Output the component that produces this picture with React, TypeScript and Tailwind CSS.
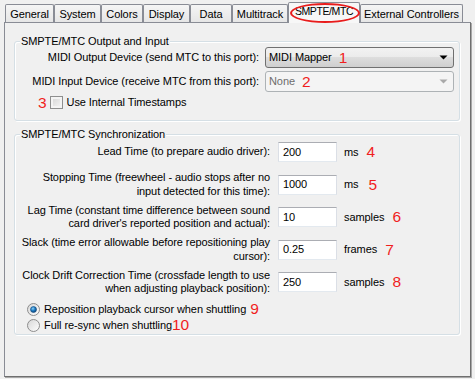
import React from "react";

const RED = "text-[#f01e1e] text-[15.5px] leading-none font-['Liberation_Sans',Arial,sans-serif]";

const tabs: { label: string; w: string; selected?: boolean }[] = [
  { label: "General", w: "w-[49px]" },
  { label: "System", w: "w-[47px]" },
  { label: "Colors", w: "w-[42px]" },
  { label: "Display", w: "w-[47px]" },
  { label: "Data", w: "w-[42px]" },
  { label: "Multitrack", w: "w-[56px]" },
  { label: "SMPTE/MTC", w: "w-[72px]", selected: true },
  { label: "External Controllers", w: "w-[103px]" },
];

function Tab({ label, w, selected }: { label: string; w: string; selected?: boolean }) {
  if (selected) {
    return (
      <div
        className={`${w} relative top-[1px] z-10 h-[21px] flex items-center justify-center pb-[2px] border border-b-0 border-[#898c95] rounded-t-[2px] bg-[#f7f7f7] whitespace-nowrap text-[10.5px] tracking-[-0.4px]`}
      >
        {label}
        <div className="absolute left-[1px] top-[0px] w-[70px] h-[20px] rounded-[50%] border-2 border-[#e81c1c]" />
      </div>
    );
  }
  return (
    <div
      className={`${w} h-[18px] flex items-center justify-center pt-[1px] border border-b-0 border-[#898c95] rounded-t-[2px] bg-gradient-to-b from-[#f5f5f5] to-[#e6e6e6] whitespace-nowrap`}
    >
      {label}
    </div>
  );
}

function Group({ title, className, children }: { title: string; className: string; children: React.ReactNode }) {
  return (
    <div
      className={`relative border border-[#d5dfe5] rounded-[3px] shadow-[inset_1px_1px_0_#ffffff,1px_1px_0_#ffffff] ${className}`}
    >
      <span className="absolute left-[5px] -top-[8px] px-[1px] leading-[14px] bg-[#f0f0f0] whitespace-nowrap">
        {title}
      </span>
      {children}
    </div>
  );
}

function Combo({ text, num, disabled }: { text: string; num: string; disabled?: boolean }) {
  if (disabled) {
    return (
      <div className="w-[189px] h-[21px] ml-[6px] flex items-center pl-[3px] pr-[5px] border border-[#adb2b5] rounded-[3px] bg-[#f4f4f4]">
        <span className="text-[#6d6d6d]">{text}</span>
        <span className={`${RED} ml-[7px]`}>{num}</span>
        <div className="flex-1" />
        <svg width="9" height="5" viewBox="0 0 9 5">
          <path d="M0.5 0.5 H8.5 L4.5 4.5 Z" fill="#a9a9a9" />
        </svg>
      </div>
    );
  }
  return (
    <div className="w-[189px] h-[21px] ml-[6px] flex items-center pl-[3px] pr-[5px] border border-[#707070] rounded-[3px] bg-[linear-gradient(to_bottom,#f2f2f2_0%,#ebebeb_50%,#dddddd_50%,#cfcfcf_100%)]">
      <span>{text}</span>
      <span className={`${RED} ml-[7px]`}>{num}</span>
      <div className="flex-1" />
      <svg width="9" height="5" viewBox="0 0 9 5">
        <path d="M0.5 0.5 H8.5 L4.5 4.5 Z" fill="#000000" />
      </svg>
    </div>
  );
}

function Field({ value }: { value: string }) {
  return (
    <div className="ml-[8px] w-[59px] h-[20px] flex items-center pl-[4px] bg-white border border-[#abadb3] border-l-[#dbdfe6] border-r-[#dbdfe6] border-b-[#e3e9ef]">
      {value}
    </div>
  );
}

function SyncRow({
  lines,
  value,
  unit,
  num,
  numGap,
}: {
  lines: string[];
  value: string;
  unit: string;
  num: string;
  numGap: string;
}) {
  return (
    <div className="h-[28px] flex items-center">
      <div className="w-[255px] flex justify-end">
        <div className="text-right whitespace-nowrap leading-[13.5px]">
          {lines.map((l, i) => (
            <div key={i}>{l}</div>
          ))}
        </div>
      </div>
      <Field value={value} />
      <span className="ml-[7px]">{unit}</span>
      <span className={`${RED} ${numGap}`}>{num}</span>
    </div>
  );
}

function Radio({ checked }: { checked?: boolean }) {
  return (
    <svg width="13" height="13" viewBox="0 0 13 13">
      <defs>
        <linearGradient id={checked ? "rgc" : "rgu"} x1="0" y1="0" x2="1" y2="1">
          <stop offset="0" stopColor="#d6d6d6" />
          <stop offset="1" stopColor="#ffffff" />
        </linearGradient>
        <radialGradient id="dot" cx="0.4" cy="0.35" r="0.7">
          <stop offset="0" stopColor="#8fd1f5" />
          <stop offset="0.5" stopColor="#1b7bc4" />
          <stop offset="1" stopColor="#0b3a6b" />
        </radialGradient>
      </defs>
      <circle cx="6.5" cy="6.5" r="6" fill={`url(#${checked ? "rgc" : "rgu"})`} stroke="#8d8d8d" />
      {checked && <circle cx="6.5" cy="6.5" r="3" fill="url(#dot)" stroke="#104a80" strokeWidth="0.6" />}
    </svg>
  );
}

export default function App() {
  return (
    <div className="w-[475px] h-[379px] bg-[#f0f0f0] overflow-hidden text-[11px] text-black font-['Liberation_Sans',Arial,sans-serif] tracking-[-0.08px]">
      <div className="h-[22px] flex items-end pl-[5px]">
        {tabs.map((t) => (
          <Tab key={t.label} {...t} />
        ))}
      </div>
      <div className="ml-[4px] w-[467px] h-[355px] border border-[#898c95] border-r-[#6f6f6f] border-b-[#6f6f6f] shadow-[1px_1px_0_#a8a8a8] pl-[9px] pt-[18px]">
        <Group title="SMPTE/MTC Output and Input" className="w-[446px] h-[80px] pt-[5px]">
          <div className="flex items-center h-[21px]">
            <div className="w-[244px] flex justify-end">
              <span className="whitespace-nowrap">MIDI Output Device (send MTC to this port):</span>
            </div>
            <Combo text="MIDI Mapper" num="1" />
          </div>
          <div className="flex items-center h-[21px] mt-[3px]">
            <div className="w-[244px] flex justify-end">
              <span className="whitespace-nowrap">MIDI Input Device (receive MTC from this port):</span>
            </div>
            <Combo text="None" num="2" disabled />
          </div>
          <div className="flex items-center h-[13px] mt-[4px] pl-[23px]">
            <span className={RED}>3</span>
            <div className="ml-[3px] w-[13px] h-[13px] border border-[#8e8f8f] bg-[linear-gradient(135deg,#d4d4d4,#f7f7f7)] shadow-[inset_0_0_0_2px_#f4f4f4]" />
            <span className="ml-[4px]">Use Internal Timestamps</span>
          </div>
        </Group>
        <Group title="SMPTE/MTC Synchronization" className="w-[446px] h-[201px] mt-[13px] pt-[3px]">
          <div className="flex flex-col gap-[4.5px]">
            <SyncRow lines={["Lead Time (to prepare audio driver):"]} value="200" unit="ms" num="4" numGap="ml-[8px]" />
            <SyncRow
              lines={["Stopping Time (freewheel - audio stops after no", "input detected for this time):"]}
              value="1000"
              unit="ms"
              num="5"
              numGap="ml-[10px]"
            />
            <SyncRow
              lines={["Lag Time (constant time difference between sound", "card driver's reported position and actual):"]}
              value="10"
              unit="samples"
              num="6"
              numGap="ml-[8px]"
            />
            <SyncRow
              lines={["Slack (time error allowable before repositioning play", "cursor):"]}
              value="0.25"
              unit="frames"
              num="7"
              numGap="ml-[8px]"
            />
            <SyncRow
              lines={["Clock Drift Correction Time (crossfade length to use", "when adjusting playback position):"]}
              value="250"
              unit="samples"
              num="8"
              numGap="ml-[8px]"
            />
          </div>
          <div className="flex items-center h-[14px] mt-[6px] pl-[12px]">
            <Radio checked />
            <span className="ml-[4px]">Reposition playback cursor when shuttling</span>
            <span className={`${RED} ml-[4px]`}>9</span>
          </div>
          <div className="flex items-center h-[14px] mt-[2px] pl-[12px]">
            <Radio />
            <span className="ml-[4px]">Full re-sync when shuttling</span>
            <span className={RED}>10</span>
          </div>
        </Group>
      </div>
    </div>
  );
}
